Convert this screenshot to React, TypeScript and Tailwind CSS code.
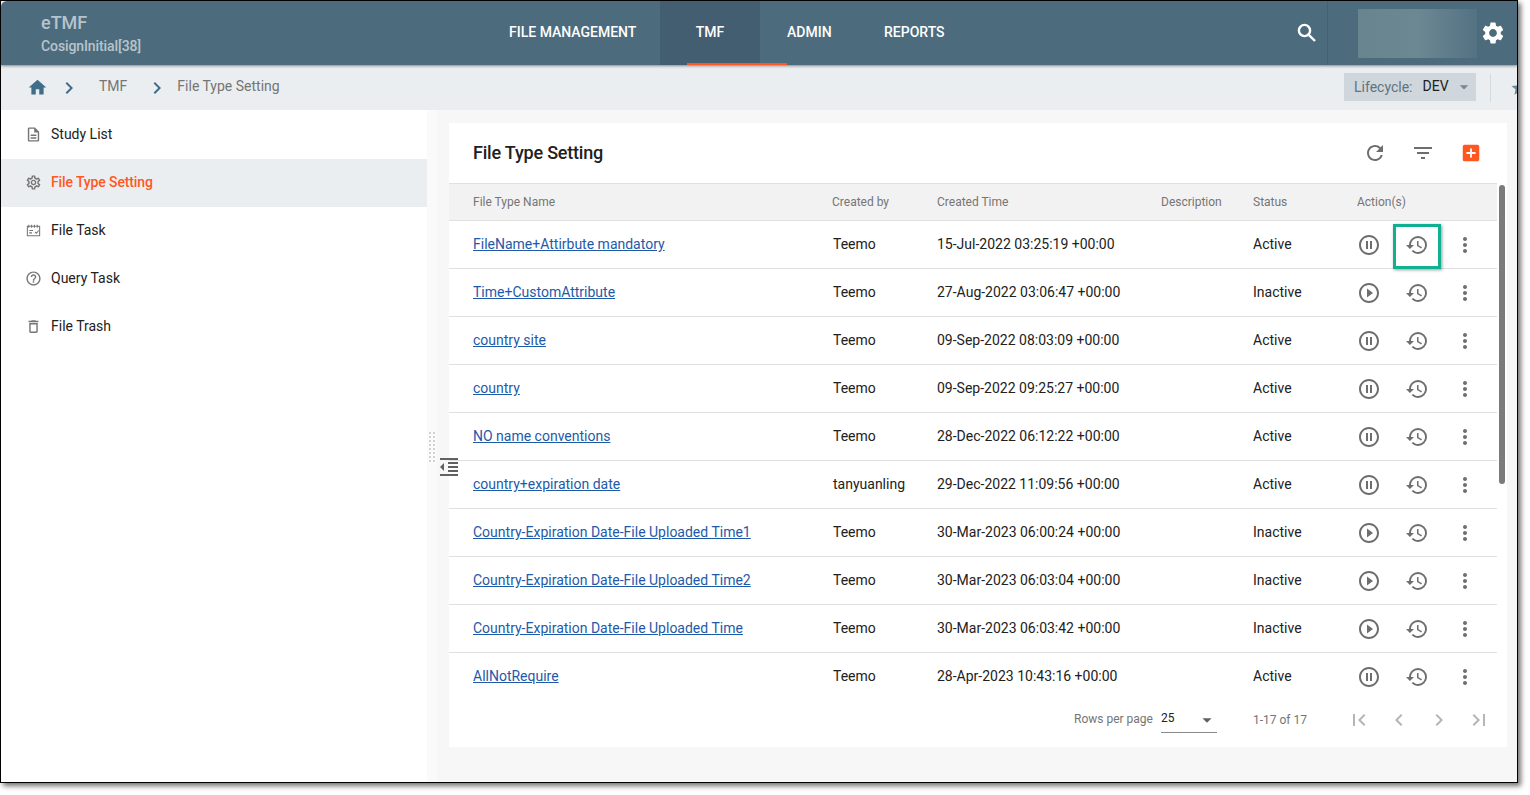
import { MdHome, MdChevronRight, MdSettings, MdRefresh, MdFilterList, MdPauseCircleOutline, MdPlayCircleOutline, MdHistory, MdMoreVert, MdFirstPage, MdLastPage, MdChevronLeft, MdArrowDropDown, MdAddBox, MdOutlineDescription, MdOutlineSettings, MdOutlineHelpOutline, MdOutlineDelete, MdStar, MdFormatIndentDecrease } from 'react-icons/md';

function TaskIcon({ size, className }: { size: number; className?: string }) {
  return (
    <svg width={size} height={size} viewBox="0 0 18 18" fill="none" stroke="currentColor" strokeWidth="1.1" className={className}>
      <path d="M2.5 4.5h13v10h-13z" />
      <path d="M4 3v3M7 3v3M10 3v3M13 3v3" />
      <path d="M4.5 9h4M4.5 11.5h3M10.5 10.5l1.5 1.5 2.5-3" />
    </svg>
  );
}

function SearchIcon() {
  return (
    <svg width="24" height="24" viewBox="0 0 24 24" fill="none" stroke="currentColor" strokeWidth="2.4">
      <circle cx="9.5" cy="9.5" r="5.6" />
      <path d="M13.8 13.8l6.2 6.2" />
    </svg>
  );
}

const NAV = [
  { label: 'Study List', Icon: MdOutlineDescription },
  { label: 'File Type Setting', Icon: MdOutlineSettings, active: true },
  { label: 'File Task', Icon: TaskIcon },
  { label: 'Query Task', Icon: MdOutlineHelpOutline },
  { label: 'File Trash', Icon: MdOutlineDelete },
];

const ROWS = [
  { name: 'FileName+Attirbute mandatory', by: 'Teemo', time: '15-Jul-2022 03:25:19 +00:00', status: 'Active' },
  { name: 'Time+CustomAttribute', by: 'Teemo', time: '27-Aug-2022 03:06:47 +00:00', status: 'Inactive' },
  { name: 'country site', by: 'Teemo', time: '09-Sep-2022 08:03:09 +00:00', status: 'Active' },
  { name: 'country', by: 'Teemo', time: '09-Sep-2022 09:25:27 +00:00', status: 'Active' },
  { name: 'NO name conventions', by: 'Teemo', time: '28-Dec-2022 06:12:22 +00:00', status: 'Active' },
  { name: 'country+expiration date', by: 'tanyuanling', time: '29-Dec-2022 11:09:56 +00:00', status: 'Active' },
  { name: 'Country-Expiration Date-File Uploaded Time1', by: 'Teemo', time: '30-Mar-2023 06:00:24 +00:00', status: 'Inactive' },
  { name: 'Country-Expiration Date-File Uploaded Time2', by: 'Teemo', time: '30-Mar-2023 06:03:04 +00:00', status: 'Inactive' },
  { name: 'Country-Expiration Date-File Uploaded Time', by: 'Teemo', time: '30-Mar-2023 06:03:42 +00:00', status: 'Inactive' },
  { name: 'AllNotRequire', by: 'Teemo', time: '28-Apr-2023 10:43:16 +00:00', status: 'Active' },
];

const COLS = 'grid grid-cols-[383px_105px_224px_92px_104px_1fr] items-center';

export default function App() {
  return (
    <div className="w-[1530px] h-[795px] bg-white overflow-hidden font-['Roboto',sans-serif]">
      <div className="w-[1518px] h-[783px] border border-black bg-[#f7f7f7] shadow-[3px_3px_5px_rgba(0,0,0,0.55)] flex flex-col overflow-hidden">
        {/* top bar */}
        <header className="h-[64px] shrink-0 bg-[#4c6c7e] flex items-stretch relative z-10 shadow-[0_1px_3px_rgba(0,0,0,0.45)] rounded-tl-[6px]">
          <div className="w-[508px] pl-[40px] pt-[11px] text-[#b7c4cc]">
            <div className="text-[18px] leading-[22px] font-medium">eTMF</div>
            <div className="text-[14px] leading-[20px] mt-[2px] font-medium tracking-[-0.1px]">CosignInitial[38]</div>
          </div>
          <nav className="flex items-stretch text-white text-[14px] font-medium">
            <div className="w-[151px] flex items-center pb-[2px]">FILE MANAGEMENT</div>
            <div className="w-[100px] flex items-center justify-center bg-[#435e70] relative pb-[2px]">
              TMF
              <span className="absolute left-[27px] bottom-0 w-[100px] h-[2px] bg-[#ff5722]" />
            </div>
            <div className="w-[124px] flex items-center pl-[27px] pb-[2px]">ADMIN</div>
            <div className="flex items-center pb-[2px]">REPORTS</div>
          </nav>
          <div className="ml-auto flex items-stretch">
            <div className="w-[62px] flex items-center pl-[30px] text-white"><SearchIcon /></div>
            <div className="w-[190px] border-l border-[#436171] flex items-center pl-[30px] pr-[11px] justify-between">
              <div className="w-[119px] h-[49px] bg-gradient-to-r from-[#68848f] via-[#6c8893] to-[#537282]" />
              <MdSettings size={26} className="text-white" />
            </div>
          </div>
        </header>

        {/* breadcrumb */}
        <div className="h-[45px] shrink-0 bg-[#ebeef1] flex items-center text-[14px] text-[#757575]">
          <MdHome size={21} className="ml-[26px] text-[#3f6d8a]" />
          <MdChevronRight size={24} className="ml-[9px] text-[#3f6d8a]" />
          <span className="ml-[18px] mt-[-2px]">TMF</span>
          <MdChevronRight size={24} className="ml-[18px] text-[#3f6d8a]" />
          <span className="ml-[8px] mt-[-2px]">File Type Setting</span>
          <div className="ml-auto flex items-center">
            <div className="w-[132px] h-[28px] bg-[#cfd7dd] flex items-center pl-[10px] mt-[-1px]">
              <span className="text-[#5f7380]">Lifecycle:</span>
              <span className="ml-[10px] text-[#212121] mt-[-1px]">DEV</span>
              <MdArrowDropDown size={20} className="ml-[5px] text-[#78858e]" />
            </div>
            <div className="w-px h-[28px] bg-[#d3d9dd] ml-[14px]" />
            <MdStar size={18} className="ml-[19px] mr-[-11px] text-[#6f8796]" />
          </div>
        </div>

        <div className="flex flex-1 min-h-0">
          {/* side menu */}
          <aside className="w-[426px] shrink-0 bg-white pt-[1px]">
            {NAV.map(n => (
              <div key={n.label} className={`h-[48px] flex items-center pb-[2px] text-[14px] ${n.active ? 'bg-[#ebeef0] text-[#ff5722] font-medium tracking-[-0.12px]' : 'text-[#212121]'}`}>
                <n.Icon size={17} className="ml-[24px] mr-[9px] text-[#757575]" />
                {n.label}
              </div>
            ))}
          </aside>

          {/* resize gutter */}
          <div className="w-[10px] shrink-0 bg-[#fafafa] relative">
            <svg width="6" height="30" viewBox="0 0 6 30" className="absolute left-[2px] top-[322px] text-[#d2d2d2]" fill="currentColor">
              {[0, 4, 8, 12, 16, 20, 24, 28].map(y => (
                <g key={y}>
                  <rect x="0" y={y} width="2" height="2" />
                  <rect x="4" y={y} width="2" height="2" />
                </g>
              ))}
            </svg>
            <MdFormatIndentDecrease size={24} className="absolute z-10 left-[10px] top-[345px] text-[#616161]" />
          </div>

          <main className="flex-1 min-w-0 pt-[13px] pl-[12px] pr-[10px]">
            <div className="w-[1058px] h-[624px] bg-white relative flex flex-col">
              <div className="h-[60px] shrink-0 flex items-center pl-[24px] pr-[25px]">
                <h1 className="text-[18px] font-medium text-[#212121] tracking-[-0.2px] mt-[-2px]">File Type Setting</h1>
                <div className="ml-auto flex items-center text-[#6e6e6e]">
                  <MdRefresh size={24} />
                  <MdFilterList size={24} className="ml-[24px]" />
                  <MdAddBox size={22} className="ml-[25px] text-[#ff5722]" />
                </div>
              </div>

              <div className="w-[1048px]">
                <div className={`${COLS} h-[38px] bg-[#f2f2f2] border-t border-b border-[#e0e0e0] text-[12px] text-[#757575]`}>
                  <div className="pl-[24px]">File Type Name</div>
                  <div>Created by</div>
                  <div>Created Time</div>
                  <div>Description</div>
                  <div>Status</div>
                  <div>Action(s)</div>
                </div>
                {ROWS.map((r, i) => (
                  <div key={r.name} className={`${COLS} h-[48px] text-[14px] text-[#212121] border-b ${i < ROWS.length - 1 ? 'border-[#e0e0e0]' : 'border-transparent'}`}>
                    <a className="pl-[24px] text-[#1e5aa8] underline whitespace-nowrap">{r.name}</a>
                    <div className="pl-px">{r.by}</div>
                    <div>{r.time}</div>
                    <div />
                    <div>{r.status}</div>
                    <div className="flex items-center text-[#6e6e6e]">
                      {r.status === 'Active'
                        ? <MdPauseCircleOutline size={24} />
                        : <MdPlayCircleOutline size={24} />}
                      <div className="relative ml-[24px] w-[24px] h-[24px]">
                        <MdHistory size={24} />
                        {i === 0 && <span className="absolute left-[-12px] top-[-9px] w-[48px] h-[45px] border-[3px] border-[#0fb190] shadow-[1px_1px_3px_rgba(0,0,0,0.4)]" />}
                      </div>
                      <MdMoreVert size={24} className="ml-[24px]" />
                    </div>
                  </div>
                ))}
              </div>

              {/* scrollbar */}
              <div className="absolute left-[1050px] top-[62px] w-[6px] h-[299px] bg-[#7b7b7b] rounded-[3px]" />

              {/* pagination */}
              <div className="mt-[-1px] flex items-center text-[12px] text-[#757575] h-[40px]">
                <span className="ml-[625px] mt-[-2px]">Rows per page</span>
                <div className="ml-[8px] w-[56px] h-[25px] border-b border-[#8a8a8a] flex items-center justify-between text-[#212121]">
                  <span className="mt-[-3px]">25</span>
                  <MdArrowDropDown size={22} className="text-[#616161] mr-[-1px]" />
                </div>
                <span className="ml-[36px]">1-17 of 17</span>
                <div className="ml-[40px] flex items-center gap-[16px] text-[#b5b5b5]">
                  <MdFirstPage size={24} />
                  <MdChevronLeft size={24} />
                  <MdChevronRight size={24} />
                  <MdLastPage size={24} />
                </div>
              </div>
            </div>
          </main>
        </div>
      </div>
    </div>
  );
}
